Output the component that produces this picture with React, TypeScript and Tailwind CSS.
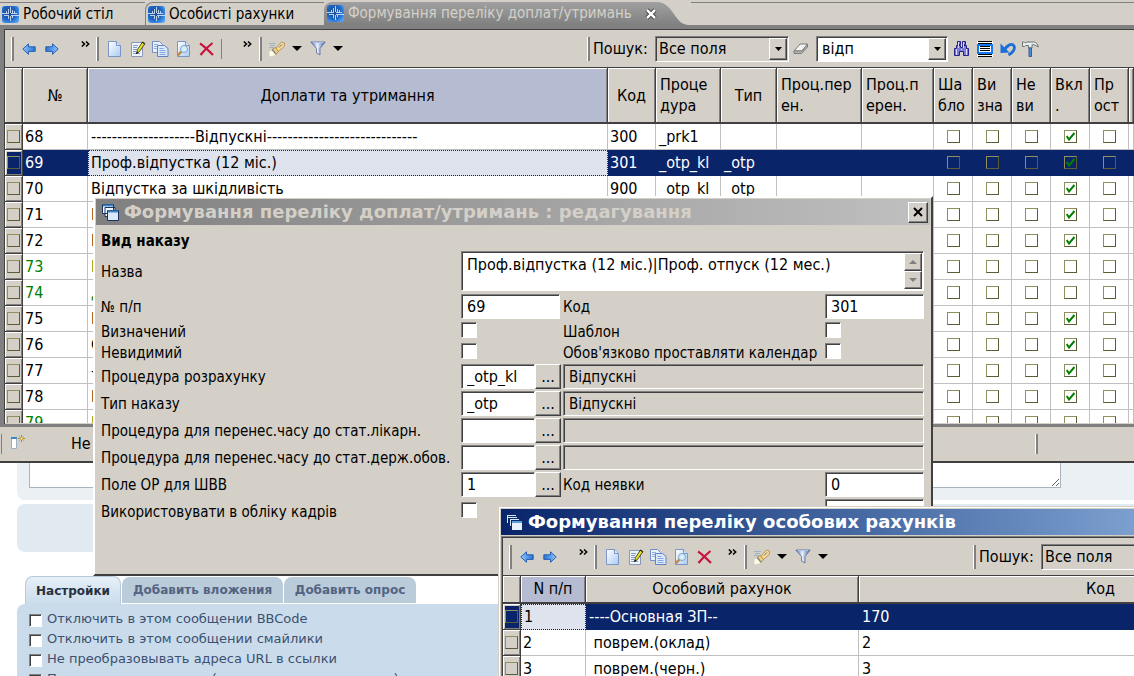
import type { ReactNode } from "react";
import clsx from "clsx";

type Row = {
  no: string;
  name: string;
  code?: string;
  proc?: string;
  type?: string;
  included?: boolean;
  green?: boolean;
};

const rows: Row[] = [
  { no: "68", name: "--------------------Відпускні-----------------------------", code: "300", proc: "_prk1", included: true },
  { no: "69", name: "Проф.відпустка (12 міс.)", code: "301", proc: "_otp_kl", type: "_otp", included: true },
  { no: "70", name: "Відпустка за шкідливість", code: "900", proc: "_otp_kl", type: "_otp", included: true },
  { no: "71", name: "В", included: true },
  { no: "72", name: "В", included: true },
  { no: "73", name: "В", green: true },
  { no: "74", name: "Д", green: true },
  { no: "75", name: "В", included: true },
  { no: "76", name: "О", included: true },
  { no: "77", name: "-", included: true },
  { no: "78", name: "В", included: true },
  { no: "79", name: "В", green: true },
];

const flagColumns = ["Ша\nбло", "Ви\nзна", "Не\nви", "Вкл\n.", "Пр\nост"];

const accounts = [
  { no: "1", name: "----Основная ЗП--", code: "170" },
  { no: "2", name: " поврем.(оклад)", code: "2" },
  { no: "3", name: " поврем.(черн.)", code: "3" },
];

const forumOptions = [
  "Отключить в этом сообщении BBCode",
  "Отключить в этом сообщении смайлики",
  "Не преобразовывать адреса URL в ссылки",
  "Присоединить подпись (подпись можно изменить)",
];

const sunken = "border border-[#808080] border-r-white border-b-white shadow-[inset_1px_1px_0_#404040]";
const raised =
  "border border-white border-r-[#404040] border-b-[#404040] bg-[#d4d0c8] shadow-[inset_-1px_-1px_0_#808080]";
const headCell =
  "border-r border-b-2 border-[#404040] font-normal shadow-[inset_1px_1px_0_#fff,inset_-1px_0_0_#808080]";

/* ---------- icons ---------- */

function LogoIcon() {
  return (
    <svg width="17" height="17" viewBox="0 0 17 17" className="shrink-0">
      <defs>
        <radialGradient id="logo" cx="0.4" cy="0.4" r="0.7">
          <stop offset="0" stopColor="#1a478c" />
          <stop offset="0.6" stopColor="#1f66c4" />
          <stop offset="1" stopColor="#4fa0f5" />
        </radialGradient>
      </defs>
      <rect width="17" height="17" rx="3" fill="url(#logo)" />
      <path
        d="M0 7.500h7M2 9.500h5M9 7.500h6M9 9.500h8M4.500 5v2M6.500 3v4M8.500 1v6M10.500 4v3M12.500 5v2M6.500 10v3M8.500 10v5M10.500 10v2"
        stroke="#e4f1ff"
        strokeWidth="0.8"
        fill="none"
      />
    </svg>
  );
}

function ArrowIcon({ right }: { right?: boolean }) {
  return (
    <svg width="14" height="12" viewBox="0 0 14 12" className={clsx(right && "-scale-x-100")}>
      <defs>
        <linearGradient id="arrow" x2="1">
          <stop offset="0" stopColor="#8cc6f8" />
          <stop offset="1" stopColor="#2a72d4" />
        </linearGradient>
      </defs>
      <path d="M.8 6 6.5.8v3h6.7v4.6H6.5v2.9z" fill="url(#arrow)" stroke="#2461b8" />
    </svg>
  );
}

function Sheet() {
  return (
    <>
      <defs>
        <linearGradient id="sheet" x2="1" y2="1">
          <stop offset="0" stopColor="#fff" />
          <stop offset="1" stopColor="#a9cbf3" />
        </linearGradient>
      </defs>
      <path d="M1.5.5h8l4 4v11h-12z" fill="url(#sheet)" stroke="#7d94c8" />
      <path d="M9.5.5v4h4" fill="#dbe8fa" stroke="#7d94c8" />
    </>
  );
}

function NewIcon() {
  return (
    <svg width="15" height="16" viewBox="0 0 15 16">
      <Sheet />
    </svg>
  );
}

function EditIcon() {
  return (
    <svg width="16" height="16" viewBox="0 0 16 16">
      <path d="M1.5 1.5h11v14h-11z" fill="#eef4fc" stroke="#8898b8" />
      <path d="M3 4.500h5M3 6.500h4M3 8.500h4M3 10.500h3M3 12.500h7" stroke="#7f9ccc" />
      <path d="m6.500 12.500 1-4 5-7.500 2.500 1.500-5.500 8z" fill="#e8e020" stroke="#222" strokeWidth="0.8" />
      <path d="m6 13 1-2.500 1.600 1.200z" fill="#111" />
      <path d="m12 1 2.500 2" stroke="#111" />
    </svg>
  );
}

function CopyIcon() {
  return (
    <svg width="17" height="16" viewBox="0 0 17 16">
      <path d="M.5.5h7l3 3v8H.5z" fill="#e8f1fd" stroke="#7390cc" />
      <path d="M2 3.500h4M2 5.500h3M2 7.500h3" stroke="#8fade0" />
      <path d="M5.500 4.500h7l3.500 3v8H5.500z" fill="#dbe9fc" stroke="#6382c4" />
      <path d="M7.500 7.500h4M7.500 9.500h6M7.500 11.500h6M7.500 13.500h6" stroke="#86a5de" />
    </svg>
  );
}

function PreviewIcon() {
  return (
    <svg width="15" height="16" viewBox="0 0 15 16">
      <Sheet />
      <circle cx="8" cy="8" r="3.500" fill="#d4effd" stroke="#7fa3bd" />
      <path d="M5.300 10.700 1.500 14.500" stroke="#c08a50" strokeWidth="2.500" />
    </svg>
  );
}

function DeleteIcon() {
  return (
    <svg width="15" height="14" viewBox="0 0 15 14">
      <path d="M1 1.500C5 4 9.500 8.500 14 13M13.500 1C9 4.500 5 8.500 1.500 13" stroke="#c8143c" strokeWidth="2.200" fill="none" />
    </svg>
  );
}

function FlashlightIcon() {
  return (
    <svg width="18" height="16" viewBox="0 0 18 16">
      <path d="M1 2.500h7M2 4.500h5M1 6.500h5" stroke="#9db4c4" />
      <path d="m1.500 10.500 3-1.500 3 5-6 1.500z" fill="#fffbe0" />
      <path d="m4.500 8 3-1.500 3 4L8 13.500z" fill="#f4cf80" stroke="#ab8445" strokeWidth="0.8" />
      <path d="M8 7 13.500 1l3 1-.3 3.500-6 5z" fill="#f9dc9c" stroke="#ab8445" strokeWidth="0.8" />
      <path d="m11 6.500 3-3" stroke="#59697c" />
      <path d="M4 8.500 8 13" stroke="#7c8794" strokeWidth="1.200" />
    </svg>
  );
}

function FunnelIcon() {
  return (
    <svg width="16" height="15" viewBox="0 0 16 15">
      <defs>
        <linearGradient id="funnel" x2="1">
          <stop offset="0" stopColor="#4568b4" />
          <stop offset="0.450" stopColor="#eaf2fc" />
          <stop offset="1" stopColor="#3f5fa0" />
        </linearGradient>
      </defs>
      <path d="M.8 1h14.400l-5.200 6.500V14L6.500 12V7.500z" fill="url(#funnel)" stroke="#56699a" strokeWidth="0.8" />
      <path d="M2.500 1.500h11" stroke="#a9c3ea" />
    </svg>
  );
}

function DownTriangle() {
  return (
    <svg width="10" height="5" viewBox="0 0 10 5">
      <path d="M0 0h10L5 5z" fill="#000" />
    </svg>
  );
}

function EraserIcon() {
  return (
    <svg width="16" height="12" viewBox="0 0 16 12">
      <path d="M1 8 7 1h7.500L9 8z" fill="#f3f3f1" stroke="#7a7a7a" />
      <path d="M1 8v2.500h7.500L14.500 4V1L9 8z" fill="#b9b9b9" stroke="#7a7a7a" />
    </svg>
  );
}

function BinocularsIcon() {
  return (
    <svg width="15" height="15" viewBox="0 0 15 15">
      <path
        d="M3.500.5h3v3h-3zM8.500.5h3v3h-3zM2.500 4.500h4v2h2v-2h4v3h2v7h-5v-4h-4v4h-5v-7h2z"
        fill="#7d7ad6"
        stroke="#23208c"
      />
      <path d="M2.500 8v6M4.500 1v6M12.500 8v6M9.500 1v6M7 8.500h1" stroke="#dcdcf8" />
    </svg>
  );
}

function LinesIcon() {
  return (
    <svg width="16" height="16" viewBox="0 0 16 16">
      <path d="M0 0h16v16H0z" fill="#fff" />
      <path d="M1 .5h14M1 2.500h14M1 13.500h14M1 15.500h14" stroke="#000" />
      <rect x="1" y="4" width="14" height="8" fill="#fff" stroke="#1478f0" strokeWidth="2" />
      <path d="M3 5.500h10M3 7.500h10M3 9.500h10" stroke="#000" />
    </svg>
  );
}

function UndoIcon() {
  return (
    <svg width="16" height="14" viewBox="0 0 16 14">
      <path d="M4 8.500C7 3 12 .5 14 4c1.500 3-1.500 7-5.500 9" fill="none" stroke="#1d6fd8" strokeWidth="2.800" />
      <path d="M.5 1.500V11l9-.5z" fill="#1d6fd8" />
    </svg>
  );
}

function HammerIcon() {
  return (
    <svg width="17" height="16" viewBox="0 0 17 16">
      <path d="M.5 1h2l1 1L5 1h7.500c2 .5 3.200 2 3.800 5l-4-2.200H10V7H6.500V4.500H3.500l-1 1h-2z" fill="#e9ecec" stroke="#6c7474" />
      <path d="M7 7h2.500v8.500H7z" fill="#4d8fdc" stroke="#3a5f92" />
    </svg>
  );
}

function WindowsIcon({ active }: { active?: boolean }) {
  if (active) {
    return (
      <svg width="15" height="15" viewBox="0 0 15 15" className="shrink-0">
        <path d="M0 .5h9M0 2.500h10M.5 0v8M3 4.500h9M3.500 4v7" stroke="#cfe6fb" />
        <path d="M5 6h10v9H5z" fill="#e9f1fc" />
        <path d="M5 7h10" stroke="#5aa0dc" strokeWidth="2" />
      </svg>
    );
  }
  return (
    <svg width="17" height="17" viewBox="0 0 17 17" className="shrink-0">
      <path d="M.5.5h11v9H.5zM3 3.500h10v9H3z" fill="#f4f8ff" stroke="#1c3560" />
      <path d="M5.500 6.500h11v10h-11z" fill="#dce9fb" stroke="#1c3560" />
      <path d="M1 1.500h10M6 7.500h10" stroke="#3f86c8" strokeWidth="2" />
    </svg>
  );
}

function CrossIcon() {
  return (
    <svg width="10" height="10" viewBox="0 0 10 10">
      <path d="m1 1 8 8M9 1 1 9" stroke="#000" strokeWidth="2" />
    </svg>
  );
}

/* ---------- small controls ---------- */

function Grip() {
  return <span className="h-6 w-[3px] shrink-0 border-r-2 border-l border-l-white border-r-[#808080]" />;
}

function ToolButton({ label, children }: { label: string; children: ReactNode }) {
  return (
    <button type="button" aria-label={label} className="flex h-6 w-[23px] shrink-0 items-center justify-center">
      {children}
    </button>
  );
}

function MenuButton({ label }: { label: string }) {
  return (
    <button type="button" aria-label={label} className="flex h-6 w-[18px] shrink-0 items-center justify-center">
      <DownTriangle />
    </button>
  );
}

function MoreButton() {
  return (
    <button type="button" aria-label="Ще" className="mb-2.5 flex h-4 w-4 shrink-0 items-center justify-center">
      <svg width="9" height="6" viewBox="0 0 9 6">
        <path d="m.8.5 2.700 2.500L.8 5.500M5 .5 7.700 3 5 5.500" fill="none" stroke="#000" strokeWidth="1.500" />
      </svg>
    </button>
  );
}

function DropArrow() {
  return (
    <span className={clsx(raised, "flex h-[22px] w-[18px] shrink-0 items-center justify-center")}>
      <svg width="7" height="4" viewBox="0 0 7 4">
        <path d="M0 0h7L3.500 4z" fill="#000" />
      </svg>
    </span>
  );
}

function FieldSelect({ id, className }: { id: string; className: string }) {
  return (
    <>
      <label htmlFor={id} className="ml-[3px] w-[62px] shrink-0">
        Пошук:
      </label>
      <div className={clsx(sunken, "relative h-[26px] shrink-0", className)}>
        <select id={id} className="h-full w-full appearance-none bg-transparent pl-[3px] outline-none">
          <option>Все поля</option>
        </select>
        <span className="pointer-events-none absolute top-px right-px">
          <DropArrow />
        </span>
      </div>
    </>
  );
}

function ToolbarIcons({ divider }: { divider?: boolean }) {
  return (
    <>
      <Grip />
      <div className="ml-[3px] flex">
        <ToolButton label="Назад">
          <ArrowIcon />
        </ToolButton>
        <ToolButton label="Вперед">
          <ArrowIcon right />
        </ToolButton>
      </div>
      <div className="mr-[3px] ml-3.5 flex">
        <MoreButton />
      </div>
      <Grip />
      <div className="ml-1 flex">
        <ToolButton label="Новий">
          <NewIcon />
        </ToolButton>
        <ToolButton label="Редагувати">
          <EditIcon />
        </ToolButton>
        <ToolButton label="Копіювати">
          <CopyIcon />
        </ToolButton>
        <ToolButton label="Перегляд">
          <PreviewIcon />
        </ToolButton>
        <ToolButton label="Вилучити">
          <DeleteIcon />
        </ToolButton>
      </div>
      {divider && <span className="ml-[3px] h-5 w-1 border-l border-[#808080]" />}
      <div className={clsx("mr-1 flex", divider ? "ml-3.5" : "ml-2")}>
        <MoreButton />
      </div>
      <Grip />
      <div className="ml-[3px] flex">
        <ToolButton label="Пошук">
          <FlashlightIcon />
        </ToolButton>
        <MenuButton label="Меню пошуку" />
        <ToolButton label="Фільтр">
          <FunnelIcon />
        </ToolButton>
        <MenuButton label="Меню фільтра" />
      </div>
    </>
  );
}

function RowMarker({ selected }: { selected?: boolean }) {
  return (
    <td className="border-r border-b border-[#404040] bg-[#d4d0c8] p-0 shadow-[inset_1px_1px_0_#fff,inset_-1px_-1px_0_#808080]">
      <span className={clsx("mx-auto flex h-[22px] w-3.5 items-center justify-center", selected && "bg-[#0a246a]")}>
        <span className="h-[13px] w-[13px] border border-[#8f8f60] border-r-[#5c5c38] border-b-[#5c5c38]" />
      </span>
    </td>
  );
}

function FlagBox({ label, checked }: { label: string; checked?: boolean }) {
  return (
    <span className="grid place-items-center">
      <input
        type="checkbox"
        aria-label={label}
        defaultChecked={checked}
        className="col-start-1 row-start-1 h-[13px] w-[13px] appearance-none border border-[#8f8f60] border-r-[#5c5c38] border-b-[#5c5c38]"
      />
      {checked && (
        <svg width="9" height="9" viewBox="0 0 9 9" className="pointer-events-none col-start-1 row-start-1">
          <path d="M.7 4 3 7.500 8.500 1" fill="none" stroke="#008000" strokeWidth="2" />
        </svg>
      )}
    </span>
  );
}

function SunkenCheck({ id, size }: { id: string; size?: "small" }) {
  return (
    <input
      id={id}
      type="checkbox"
      className={clsx(sunken, "shrink-0 appearance-none bg-white", size ? "h-[13px] w-[13px]" : "h-4 w-4")}
    />
  );
}

/* ---------- main window ---------- */

function TabBar() {
  return (
    <nav className="flex h-[29px] items-end border-b-4 border-[#808080] bg-[#d4d0c8] pt-[2px] text-[15px]">
      <button type="button" className="flex h-full w-[145px] items-center gap-1 border-t border-[#808080] pl-[2px]">
        <LogoIcon />
        Робочий стіл
      </button>
      <button
        type="button"
        className="flex h-full w-[179px] items-center gap-1 rounded-tl-lg border-t border-l border-[#808080] pl-[2px]"
      >
        <LogoIcon />
        Особисті рахунки
      </button>
      <div className="flex h-full items-center gap-1 rounded-tl-lg bg-linear-to-b from-[#a0a0a0] to-[#808080] pl-[3px] text-[#d4d0c8]">
        <LogoIcon />
        <button type="button" className="w-[293px] text-left whitespace-nowrap">
          Формування переліку доплат/утримань
        </button>
        <button type="button" aria-label="Закрити вкладку">
          <svg width="12" height="12" viewBox="0 0 12 12">
            <path d="m2 2 8 8M10 2l-8 8" stroke="#222" strokeWidth="4" />
            <path d="m2 2 8 8M10 2l-8 8" stroke="#fff" strokeWidth="2.500" />
          </svg>
        </button>
      </div>
      <svg width="34" height="23" viewBox="0 0 34 23" className="shrink-0">
        <defs>
          <linearGradient id="tabEnd" y2="1" x2="0">
            <stop offset="0" stopColor="#a0a0a0" />
            <stop offset="1" stopColor="#808080" />
          </linearGradient>
        </defs>
        <path d="M0 0c8 0 12 5 17 12 4 6 7 10 14 11H0z" fill="url(#tabEnd)" />
      </svg>
      <span className="h-full grow border-t border-[#808080]" />
    </nav>
  );
}

function MainTable() {
  return (
    <div className="h-[357px] overflow-hidden border-b border-[#d4d0c8] bg-white">
      <table className="w-full table-fixed border-separate border-spacing-0 border-t border-[#404040]">
        <colgroup>
          <col className="w-[18px]" />
          <col className="w-[65px]" />
          <col />
          <col className="w-12" />
          <col className="w-[65px]" />
          <col className="w-14" />
          <col className="w-[85px]" />
          <col className="w-[72px]" />
          <col className="w-[39px]" />
          <col className="w-[39px]" />
          <col className="w-[39px]" />
          <col className="w-[39px]" />
          <col className="w-[39px]" />
          <col className="w-[5px]" />
        </colgroup>
        <thead>
          <tr className="h-14 bg-[#d4d0c8] leading-[21px] whitespace-pre">
            <th className={headCell} />
            <th className={headCell}>№</th>
            <th className={clsx(headCell, "bg-[#b5bcd2]")}>Доплати та утримання</th>
            <th className={headCell}>Код</th>
            <th className={clsx(headCell, "pl-1 text-left")}>{"Проце\nдура"}</th>
            <th className={headCell}>Тип</th>
            <th className={clsx(headCell, "pl-1 text-left")}>{"Проц.пер\nен."}</th>
            <th className={clsx(headCell, "pl-1 text-left")}>{"Проц.п\nерен."}</th>
            {flagColumns.map((title) => (
              <th key={title} className={clsx(headCell, "pl-1 text-left")}>
                {title}
              </th>
            ))}
            <th className={headCell} />
          </tr>
        </thead>
        <tbody>
          {rows.map((row) => {
            const selected = row.no === "69";
            const cell = clsx("border-b p-0 whitespace-pre", selected ? "border-[#0a246a]" : "border-r border-[#c0c0c0]");
            return (
              <tr
                key={row.no}
                className={clsx("h-[26px] leading-6", selected && "bg-[#0a246a] text-white", row.green && "text-[#008000]")}
              >
                <RowMarker selected={selected} />
                <td className={clsx(cell, "pl-[2px]")}>{row.no}</td>
                <td
                  className={clsx(
                    "overflow-hidden p-0 whitespace-pre",
                    selected
                      ? "border border-dotted border-[#0a246a] bg-[#dfe3ee] pl-[2px] text-black"
                      : "border-r border-b border-[#c0c0c0] pl-[3px]",
                  )}
                >
                  {row.name}
                </td>
                <td className={clsx(cell, "pl-[2px]")}>{row.code}</td>
                <td className={clsx(cell, "pl-[3px]")}>{row.proc}</td>
                <td className={clsx(cell, "pl-[3px]")}>{row.type}</td>
                <td className={cell} />
                <td className={cell} />
                {flagColumns.map((title, i) => (
                  <td key={title} className={cell}>
                    <FlagBox label={title} checked={i === 3 && row.included} />
                  </td>
                ))}
                <td className={cell} />
              </tr>
            );
          })}
        </tbody>
      </table>
    </div>
  );
}

function MainWindow() {
  return (
    <section className="border-b-2 border-[#404040] bg-[#d4d0c8]">
      <TabBar />
      <div className="border-b-[3px] border-l-4 border-[#808080]">
        <div className="border-t border-l border-[#404040]">
          <div className="flex h-[37px] items-center pl-1.5">
            <ToolbarIcons divider />
            <div className="mr-[92px] ml-auto flex items-center">
              <Grip />
              <FieldSelect id="mainField" className="w-[134px]" />
              <ToolButton label="Очистити">
                <EraserIcon />
              </ToolButton>
              <div className={clsx(sunken, "ml-1 flex h-[26px] w-[132px] bg-white p-px")}>
                <input aria-label="Текст пошуку" defaultValue="відп" className="min-w-0 grow pl-1 outline-none" />
                <DropArrow />
              </div>
              <div className="ml-[2px] flex">
                <ToolButton label="Знайти">
                  <BinocularsIcon />
                </ToolButton>
                <ToolButton label="Список">
                  <LinesIcon />
                </ToolButton>
                <ToolButton label="Скасувати">
                  <UndoIcon />
                </ToolButton>
                <ToolButton label="Налаштування">
                  <HammerIcon />
                </ToolButton>
              </div>
            </div>
          </div>
          <MainTable />
        </div>
      </div>
      <footer className="flex h-[34px] items-center">
        <span className="h-5 w-[2px] border-r border-[#808080]" />
        <svg width="15" height="16" viewBox="0 0 15 16" className="mb-1 ml-[9px]">
          <path d="M.5 3.500h5v11h-5z" fill="#fff" stroke="#9cb0c4" />
          <path d="M0 4h6" stroke="#3f86c8" strokeWidth="2" />
          <path d="M10.500 1v7M7 4.500h7M8.500 2.500l4 4M12.500 2.500l-4 4" stroke="#b08a1c" />
          <path d="M9.500 3.500h2v2h-2z" fill="#fffbd0" />
        </svg>
        <span className="ml-[45px]">Не</span>
        <span className="mr-[96px] ml-auto h-5 w-[3px] border-r-2 border-l border-l-white border-r-[#808080]" />
      </footer>
    </section>
  );
}

/* ---------- forum page under the windows ---------- */

function ForumPage() {
  return (
    <main className="font-['DejaVu_Sans',sans-serif] text-[13px] text-[#3c5070]">
      <div className="ml-[17px] h-[37px] rounded-bl-lg bg-[#eaf0f4] pl-3">
        <textarea
          aria-label="Сообщение"
          className="mr-[73px] block h-[25px] w-[calc(100%-73px)] resize border border-t-0 border-[#a9b4bf] bg-white"
        />
      </div>
      <div className="mt-1 ml-[17px] h-12 rounded-l-lg bg-[#e1eaf1]" />
      <nav className="mt-6 ml-[25px] flex h-7 gap-px text-xs font-bold whitespace-nowrap">
        <button type="button" className="w-24 rounded-t-lg border border-b-0 border-[#b8cad9] bg-linear-to-b from-[#e6f0f8] to-[#cadceb] text-[#28313f]">
          Настройки
        </button>
        <button type="button" className="mt-px mb-px w-[161px] rounded-t-lg bg-[#bacbd9] text-[#536482]">
          Добавить вложения
        </button>
        <button type="button" className="mt-px mb-px w-[132px] rounded-t-lg bg-[#bacbd9] text-[#536482]">
          Добавить опрос
        </button>
      </nav>
      <div className="ml-[17px] rounded-tl-lg bg-[#cadceb] pt-1.5 pl-3">
        {forumOptions.map((text, i) => (
          <div key={text} className="flex h-5 items-center gap-[5px]">
            <SunkenCheck id={`option${i}`} size="small" />
            <label htmlFor={`option${i}`} className="pb-[3px]">
              {text}
            </label>
          </div>
        ))}
      </div>
    </main>
  );
}

/* ---------- edit dialog ---------- */

const fieldRow = "grid grid-cols-[360px_102px_262px_99px] items-start whitespace-nowrap";
const textBox = clsx(sunken, "h-[25px] bg-white px-[5px] text-base outline-none");

function LookupRow({ id, label, value, result }: { id: string; label: string; value: string; result?: string }) {
  return (
    <div className={clsx(fieldRow, "h-[27px] leading-[26px]")}>
      <label htmlFor={id}>{label}</label>
      <div className="flex">
        <input id={id} defaultValue={value} className={clsx(textBox, "w-[74px]")} />
        <button type="button" aria-label={`Вибрати: ${label}`} className={clsx(raised, "h-[25px] w-[26px] text-base leading-5")}>
          ...
        </button>
      </div>
      {result === undefined ? (
        <>
          <label htmlFor="absence">Код неявки</label>
          <input id="absence" defaultValue="0" className={clsx(textBox, "w-full")} />
        </>
      ) : (
        <input
          readOnly
          aria-label={`${label}, назва`}
          defaultValue={result}
          className={clsx(sunken, "col-span-2 h-[25px] bg-[#d4d0c8] px-[5px] outline-none")}
        />
      )}
    </div>
  );
}

function ScrollArrow({ up }: { up?: boolean }) {
  return (
    <button
      type="button"
      aria-label={up ? "Вгору" : "Вниз"}
      className={clsx(raised, "flex h-[18px] w-[18px] items-center justify-center")}
    >
      <svg width="8" height="4" viewBox="0 0 8 4" className={clsx(up && "rotate-180")}>
        <path d="M0 0h8L4 4z" fill="#808080" />
      </svg>
    </button>
  );
}

function EditDialog() {
  return (
    <section
      role="dialog"
      className="absolute top-[196px] left-[93px] h-[380px] w-[840px] border-2 border-[#404040] border-t-white border-l-white bg-[#d4d0c8] p-px text-[15px]"
    >
      <header className="flex h-[26px] items-center bg-linear-to-r from-[#808080] to-[#c0c0c0] pr-[2px] pl-1.5 whitespace-nowrap text-[#d4d0c8]">
        <WindowsIcon />
        <h2 className="ml-[5px] font-['DejaVu_Sans',sans-serif] text-lg font-bold">
          Формування переліку доплат/утримань : редагування
        </h2>
        <button type="button" aria-label="Закрити" className={clsx(raised, "ml-auto flex h-[21px] w-5 items-center justify-center")}>
          <CrossIcon />
        </button>
      </header>
      <form className="pl-[5px]">
        <h3 className="h-[26px] pt-1 leading-6 font-bold">Вид наказу</h3>
        <div className={clsx(fieldRow, "h-[43px] leading-[42px]")}>
          <label htmlFor="title">Назва</label>
          <div className={clsx(sunken, "col-span-3 flex h-10 bg-white p-px")}>
            <textarea
              id="title"
              defaultValue="Проф.відпустка (12 міс.)|Проф. отпуск (12 мес.)"
              className="grow resize-none overflow-hidden pl-1 text-base leading-6 outline-none"
            />
            <span className="flex flex-col">
              <ScrollArrow up />
              <ScrollArrow />
            </span>
          </div>
        </div>
        <div className={clsx(fieldRow, "h-7 leading-[26px]")}>
          <label htmlFor="number">№ п/п</label>
          <input id="number" defaultValue="69" className={clsx(textBox, "w-[99px]")} />
          <label htmlFor="code">Код</label>
          <input id="code" defaultValue="301" className={clsx(textBox, "w-full")} />
        </div>
        <div className={clsx(fieldRow, "h-[21px] leading-5")}>
          <label htmlFor="defined">Визначений</label>
          <SunkenCheck id="defined" />
          <label htmlFor="template">Шаблон</label>
          <SunkenCheck id="template" />
        </div>
        <div className={clsx(fieldRow, "h-[21px] leading-5")}>
          <label htmlFor="hidden">Невидимий</label>
          <SunkenCheck id="hidden" />
          <label htmlFor="calendar">Обов'язково проставляти календар</label>
          <SunkenCheck id="calendar" />
        </div>
        <LookupRow id="procedure" label="Процедура розрахунку" value="_otp_kl" result="Відпускні" />
        <LookupRow id="orderType" label="Тип наказу" value="_otp" result="Відпускні" />
        <LookupRow id="sickTime" label="Процедура для перенес.часу до стат.лікарн." value="" result="" />
        <LookupRow id="stateTime" label="Процедура для перенес.часу до стат.держ.обов." value="" result="" />
        <LookupRow id="shvv" label="Поле ОР для ШВВ" value="1" />
        <div className={clsx(fieldRow, "h-[27px] leading-[26px]")}>
          <label htmlFor="staff">Використовувати в обліку кадрів</label>
          <span className="flex pt-[3px]">
            <SunkenCheck id="staff" />
          </span>
          <span />
          <input aria-label="Додатковий код" className={clsx(textBox, "w-full")} />
        </div>
      </form>
    </section>
  );
}

/* ---------- accounts window ---------- */

function AccountsWindow() {
  return (
    <section className="absolute top-[506px] right-[-210px] left-[498px] h-[360px] border-t border-l border-[#d4d0c8] bg-[#d4d0c8]">
      <div className="border-t border-l border-white p-px">
        <header className="flex h-[26px] items-center bg-linear-to-r from-[#0a246a] to-[#a6caf0] pl-1.5 whitespace-nowrap text-white">
          <WindowsIcon active />
          <h2 className="ml-1.5 font-['DejaVu_Sans',sans-serif] text-lg font-bold">Формування переліку особових рахунків</h2>
        </header>
        <div className="mt-px border-t border-l border-[#808080]">
          <div className="border-t border-l border-[#404040]">
            <div className="flex h-[37px] items-center pl-1.5">
              <ToolbarIcons />
              <div className="ml-[141px] flex grow items-center">
                <Grip />
                <FieldSelect id="accountsField" className="grow" />
              </div>
            </div>
            <table className="w-full table-fixed border-separate border-spacing-0 border-t border-[#404040] bg-white">
              <colgroup>
                <col className="w-[18px]" />
                <col className="w-[65px]" />
                <col className="w-[273px]" />
                <col />
              </colgroup>
              <thead>
                <tr className="h-7 bg-[#d4d0c8]">
                  <th className={headCell} />
                  <th className={clsx(headCell, "bg-[#b5bcd2]")}>N п/п</th>
                  <th className={headCell}>Особовий рахунок</th>
                  <th className={headCell}>Код</th>
                </tr>
              </thead>
              <tbody>
                {accounts.map((row) => {
                  const selected = row.no === "1";
                  const cell = clsx(
                    "border-b p-0 pl-[3px] whitespace-pre",
                    selected ? "border-[#0a246a]" : "border-r border-[#c0c0c0]",
                  );
                  return (
                    <tr key={row.no} className={clsx("h-[26px] leading-6", selected && "bg-[#0a246a] text-white")}>
                      <RowMarker selected={selected} />
                      <td
                        className={clsx(
                          "p-0 pl-[2px]",
                          selected
                            ? "border border-dotted border-[#0a246a] bg-[#dfe3ee] text-black"
                            : "border-r border-b border-[#c0c0c0]",
                        )}
                      >
                        {row.no}
                      </td>
                      <td className={cell}>{row.name}</td>
                      <td className={cell}>{row.code}</td>
                    </tr>
                  );
                })}
              </tbody>
            </table>
          </div>
        </div>
      </div>
    </section>
  );
}

export default function App() {
  return (
    <div className="relative h-screen overflow-hidden bg-white font-['DejaVu_Sans_Condensed','DejaVu_Sans',sans-serif] text-base text-black">
      <MainWindow />
      <ForumPage />
      <EditDialog />
      <AccountsWindow />
    </div>
  );
}
